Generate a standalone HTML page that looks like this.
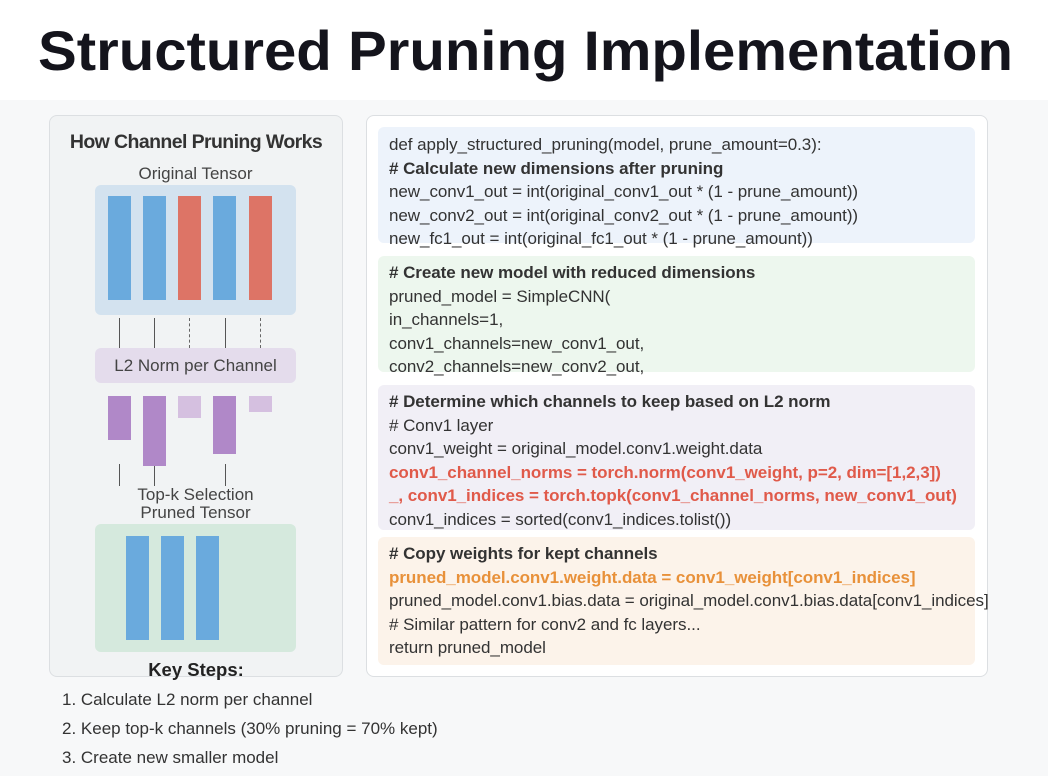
<!DOCTYPE html>
<html><head><style>
*{margin:0;padding:0;box-sizing:border-box}
body{width:1048px;height:776px;overflow:hidden;background:#f7f8f9;font-family:"Liberation Sans",sans-serif;position:relative}
.top{position:absolute;left:0;top:0;width:1048px;height:100px;background:#fff}
.abs{position:absolute}
.lp{left:49px;top:115px;width:294px;height:562px;background:#f1f3f4;border:1px solid #dcdfe2;border-radius:8px}
.rp{left:366px;top:115px;width:622px;height:562px;background:#fff;border:1px solid #dcdfe2;border-radius:8px}
.blk{position:absolute;left:378px;width:597px;border-radius:6px;padding-left:11px;font-size:17px;color:#333;line-height:23.5px;white-space:nowrap;letter-spacing:-0.05px}
.b{font-weight:bold}
.red{color:#e05a4a;font-weight:bold}
.org{color:#e8913a;font-weight:bold}
.bar{position:absolute;width:23px}
.bl{background:#6aaadd}.rd{background:#dd7466}.pu{background:#b088c8}.lpu{background:#d5c0e0}
.vl{position:absolute;width:0;border-left:1.5px solid #555}
.dl{position:absolute;width:0;border-left:1.5px dashed #666}
.c{position:absolute;text-align:center;color:#444;font-size:17px}
.st{position:absolute;left:62px;font-size:17px;color:#333}
</style></head><body>
<div class="top"></div>
<svg class="abs" style="left:0;top:0" width="1048" height="100"><text x="38" y="70" textLength="975" lengthAdjust="spacingAndGlyphs" font-family="Liberation Sans" font-weight="bold" font-size="56" fill="#14141c">Structured Pruning Implementation</text></svg>
<div class="abs lp"></div>
<div class="c b" style="left:49px;width:294px;top:131px;font-size:19.5px;color:#333;letter-spacing:-0.6px">How Channel Pruning Works</div>
<div class="c" style="left:95px;width:201px;top:164px">Original Tensor</div>
<div class="abs" style="left:95px;top:185px;width:201px;height:130px;background:#d3e2ef;border-radius:6px"></div>
<div class="bar bl" style="left:108px;top:196px;height:104px"></div>
<div class="bar bl" style="left:143px;top:196px;height:104px"></div>
<div class="bar rd" style="left:178px;top:196px;height:104px"></div>
<div class="bar bl" style="left:213px;top:196px;height:104px"></div>
<div class="bar rd" style="left:249px;top:196px;height:104px"></div>
<div class="vl" style="left:119px;top:318px;height:30px"></div>
<div class="vl" style="left:154px;top:318px;height:30px"></div>
<div class="dl" style="left:189px;top:318px;height:30px"></div>
<div class="vl" style="left:225px;top:318px;height:30px"></div>
<div class="dl" style="left:260px;top:318px;height:30px"></div>
<div class="abs" style="left:95px;top:348px;width:201px;height:35px;background:#e4dcec;border-radius:6px"></div>
<div class="c" style="left:95px;width:201px;top:356px">L2 Norm per Channel</div>
<div class="bar pu" style="left:108px;top:396px;height:44px"></div>
<div class="bar pu" style="left:143px;top:396px;height:70px"></div>
<div class="bar lpu" style="left:178px;top:396px;height:22px"></div>
<div class="bar pu" style="left:213px;top:396px;height:58px"></div>
<div class="bar lpu" style="left:249px;top:396px;height:16px"></div>
<div class="vl" style="left:119px;top:464px;height:22px"></div>
<div class="vl" style="left:154px;top:466px;height:20px"></div>
<div class="vl" style="left:225px;top:464px;height:22px"></div>
<div class="c" style="left:95px;width:201px;top:485px">Top-k Selection</div>
<div class="c" style="left:95px;width:201px;top:503px">Pruned Tensor</div>
<div class="abs" style="left:95px;top:524px;width:201px;height:128px;background:#d5e9dd;border-radius:6px"></div>
<div class="bar bl" style="left:126px;top:536px;height:104px"></div>
<div class="bar bl" style="left:161px;top:536px;height:104px"></div>
<div class="bar bl" style="left:196px;top:536px;height:104px"></div>
<div class="c b" style="left:49px;width:294px;top:659px;font-size:18.5px;color:#222">Key Steps:</div>
<div class="st" style="top:690px">1. Calculate L2 norm per channel</div>
<div class="st" style="top:719px">2. Keep top-k channels (30% pruning = 70% kept)</div>
<div class="st" style="top:748px">3. Create new smaller model</div>
<div class="abs rp"></div>
<div class="blk" style="top:127px;height:116px;background:#edf3fb;padding-top:6px">def apply_structured_pruning(model, prune_amount=0.3):<br><span class="b">#&nbsp;Calculate new dimensions after pruning</span><br>new_conv1_out = int(original_conv1_out * (1 - prune_amount))<br>new_conv2_out = int(original_conv2_out * (1 - prune_amount))<br>new_fc1_out = int(original_fc1_out * (1 - prune_amount))</div>
<div class="blk" style="top:256px;height:116px;background:#edf7ee;padding-top:5px"><span class="b">#&nbsp;Create new model with reduced dimensions</span><br>pruned_model = SimpleCNN(<br>in_channels=1,<br>conv1_channels=new_conv1_out,<br>conv2_channels=new_conv2_out,</div>
<div class="blk" style="top:385px;height:145px;background:#f1eff6;padding-top:5px"><span class="b">#&nbsp;Determine which channels to keep based on L2 norm</span><br># Conv1 layer<br>conv1_weight = original_model.conv1.weight.data<br><span class="red">conv1_channel_norms = torch.norm(conv1_weight, p=2, dim=[1,2,3])</span><br><span class="red">_, conv1_indices = torch.topk(conv1_channel_norms, new_conv1_out)</span><br>conv1_indices = sorted(conv1_indices.tolist())</div>
<div class="blk" style="top:537px;height:128px;background:#fcf3ea;padding-top:5px"><span class="b">#&nbsp;Copy weights for kept channels</span><br><span class="org">pruned_model.conv1.weight.data = conv1_weight[conv1_indices]</span><br>pruned_model.conv1.bias.data = original_model.conv1.bias.data[conv1_indices]<br># Similar pattern for conv2 and fc layers...<br>return pruned_model</div>
</body></html>
